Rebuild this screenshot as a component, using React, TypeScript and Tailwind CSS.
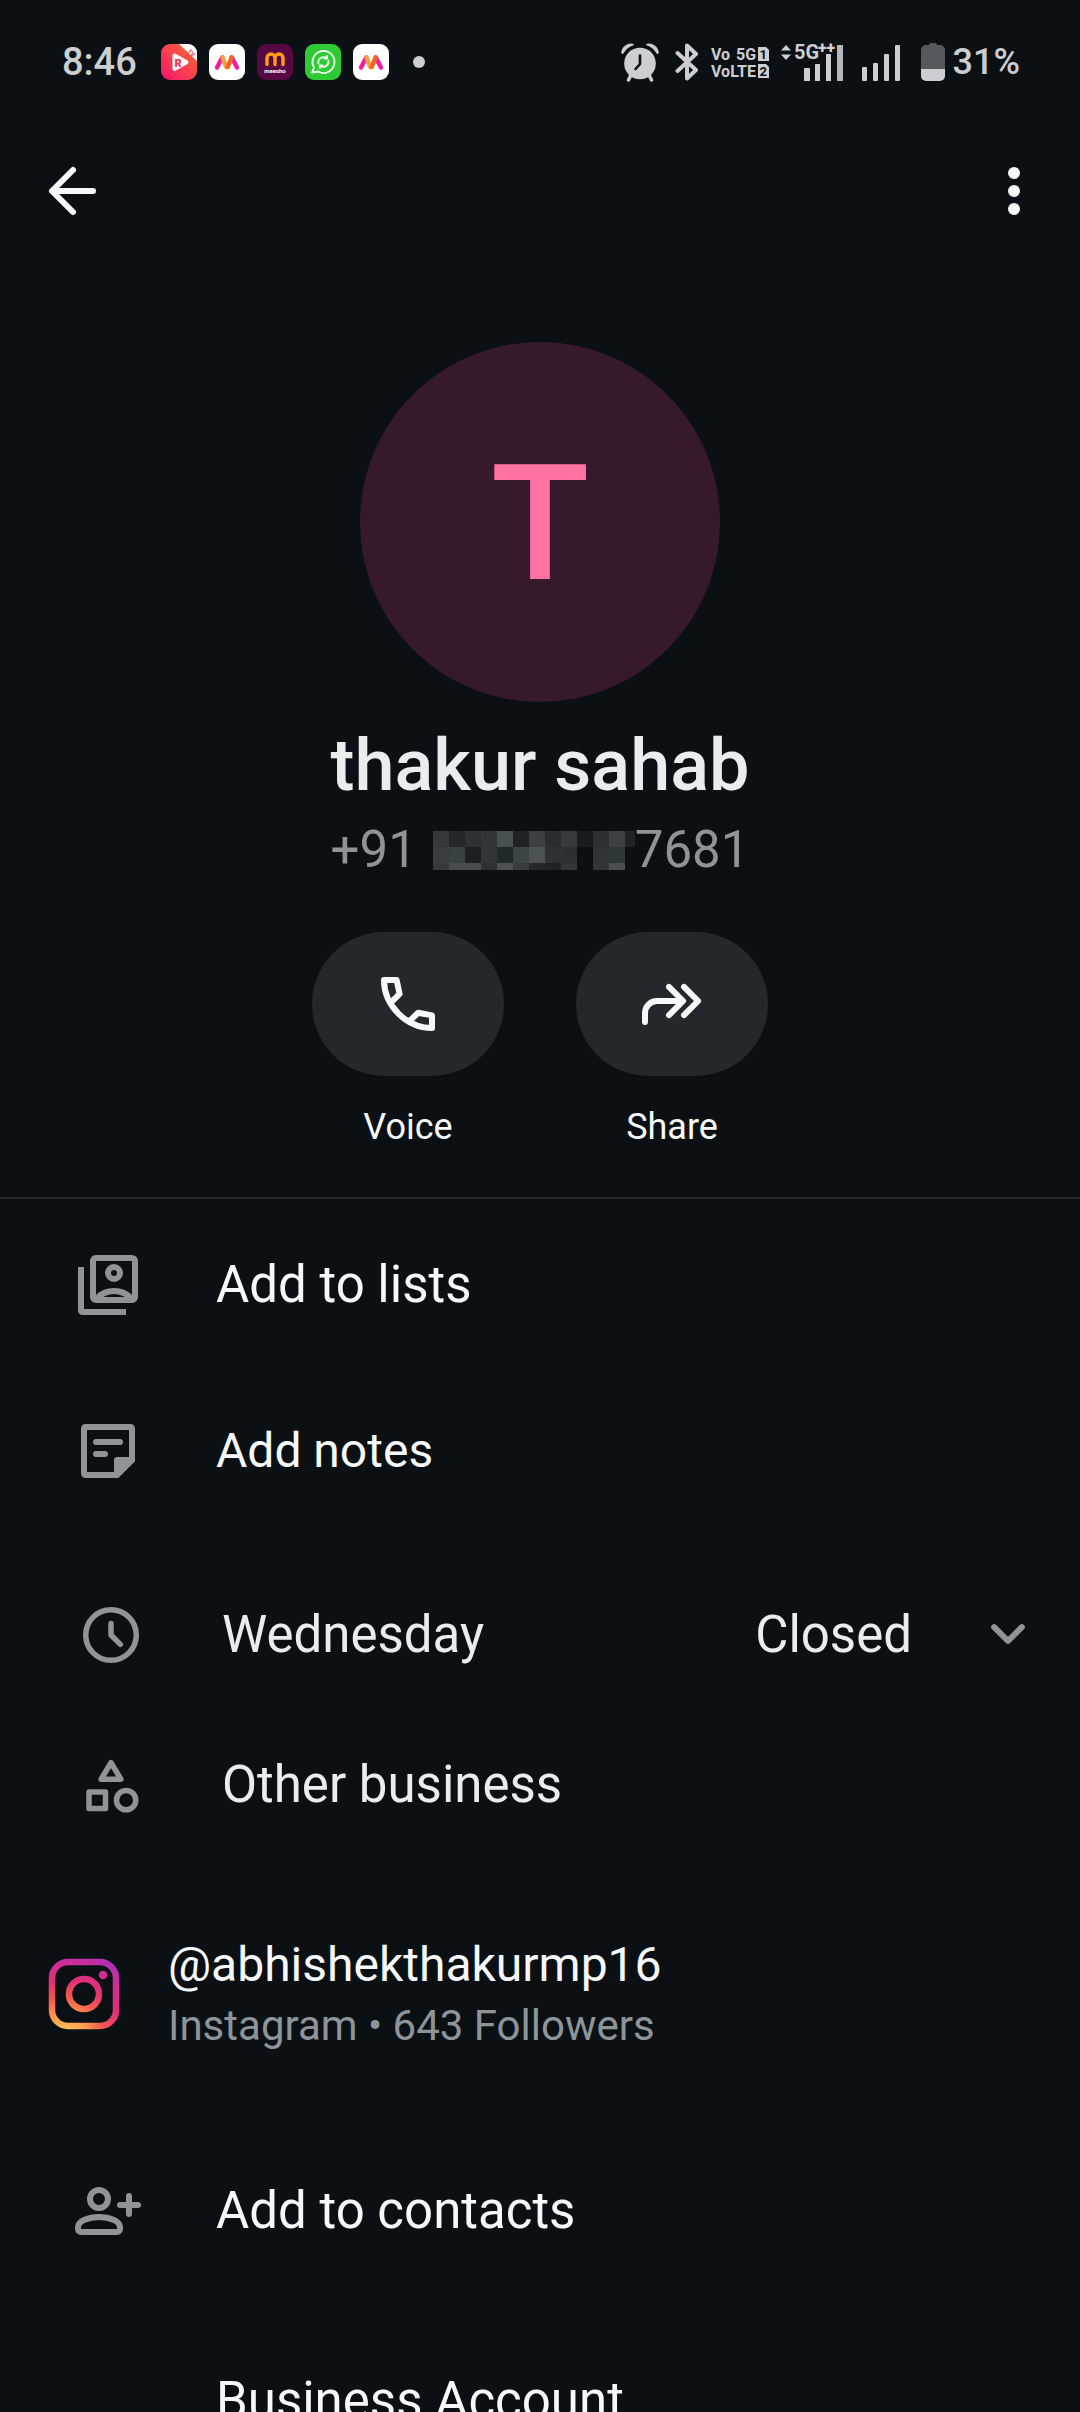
import type { ReactNode } from "react";

type MaskRow = readonly string[];

const maskRows: readonly MaskRow[] = [
  ["#33393c", "#22272a", "#2d3235", "#30373a", "#485053", "#1d2326", "#3a4144", "#272d30", "#363b3f", "#171c20", "#2a3033", "#3a4245", "#1d2327"],
  ["#363e41", "#394144", "#1a2023", "#2f3639", "#21282b", "#3c4447", "#4b5356", "#2c3235", "#2b3033", "#0b1014", "#2e3538", "#2f3639", "#0b1014"],
  ["#343b3e", "#454d50", "#454d50", "#2b3235", "#4a5255", "#363d40", "#22282b", "#1c2225", "#2f3538", "#0b1014", "#30373a", "#485053", "#0b1014"],
];

function MyntraIcon() {
  return (
    <svg viewBox="0 0 36 36" className="size-9">
      <rect width="36" height="36" rx="9" fill="#fff" />
      <path d="M8 23.5 13.2 13.5" stroke="#ee1fa5" strokeWidth="4.4" strokeLinecap="round" />
      <path d="M28 23.5 22.8 13.5" stroke="#ee1fa5" strokeWidth="4.4" strokeLinecap="round" />
      <path d="M13.4 13.2 17.2 23" stroke="#f9a03c" strokeWidth="4.4" strokeLinecap="round" />
      <path d="M22.6 13.2 18.8 23" stroke="#f4661b" strokeWidth="4.4" strokeLinecap="round" />
    </svg>
  );
}

function RetroTvIcon() {
  return (
    <svg viewBox="0 0 36 36" className="size-9">
      <defs>
        <linearGradient id="tv" x1="0" y1="1" x2="1" y2="0">
          <stop offset="0" stopColor="#f5156c" />
          <stop offset="0.6" stopColor="#fb4a48" />
          <stop offset="1" stopColor="#fd6a3a" />
        </linearGradient>
      </defs>
      <rect width="36" height="36" rx="9" fill="url(#tv)" />
      <path d="M18 0h9a9 9 0 0 1 9 9v8Z" fill="#fff" />
      <path d="M13.5 11.5v13.5l12-6.8Z" fill="#fff" stroke="#fff" strokeWidth="4" strokeLinejoin="round" />
      <text x="13.5" y="22.5" fontSize="11" fontWeight="900" fill="#f8344f">R</text>
      <text x="26" y="8" fontSize="6" fontWeight="700" fill="#f8344f" transform="rotate(42 26 8)">TV</text>
    </svg>
  );
}

function MeeshoIcon() {
  return (
    <svg viewBox="0 0 36 36" className="size-9">
      <rect width="36" height="36" rx="9" fill="#570741" />
      <path d="M10 20.5V14a4 4 0 0 1 8 0v6.5M18 14a4 4 0 0 1 8 0v6.5" fill="none" stroke="#ff9d17" strokeWidth="3.4" strokeLinecap="round" />
      <text x="18" y="28.5" fontSize="6" fontWeight="700" textAnchor="middle" fill="#fff">meesho</text>
    </svg>
  );
}

function ChatBackupIcon() {
  return (
    <svg viewBox="0 0 36 36" className="size-9">
      <rect width="36" height="36" rx="9" fill="#2fcb35" />
      <g fill="none" stroke="#f1fff1" strokeWidth="1.8" strokeLinecap="round" strokeLinejoin="round">
        <path d="M7 28.5 9 23.5a11 11 0 1 1 4 4Z" />
        <path d="M13.4 19.5a5.2 5.2 0 0 1 8.2-5.2M23.4 16.5a5.2 5.2 0 0 1-8.2 5.2" />
        <path d="M22 11.8v2.7h-2.7M14.800 24.200v-2.700h2.700" />
      </g>
    </svg>
  );
}

function AlarmIcon() {
  return (
    <svg viewBox="0 0 38 40" className="h-10 w-[38px]" fill="#cdced1">
      <circle cx="19" cy="21.5" r="15.8" />
      <path d="M1 10.5A9 9 0 0 1 12 2.5Q5 5 1.5 11.5ZM37 10.5A9 9 0 0 0 26 2.5Q33 5 36.5 11.5Z" stroke="#cdced1" strokeWidth="1.5" strokeLinejoin="round" />
      <path d="m9.5 34-2 4M28.5 34l2 4" stroke="#cdced1" strokeWidth="3.5" strokeLinecap="round" />
      <path d="M19 13.5v8.5l-4.5 5" fill="none" stroke="#0b1014" strokeWidth="2.6" strokeLinecap="round" />
    </svg>
  );
}

function BluetoothIcon() {
  return (
    <svg viewBox="0 0 24 40" className="h-10 w-6" fill="none" stroke="#cdced1" strokeWidth="4" strokeLinecap="round" strokeLinejoin="round">
      <path d="m2.5 11 18.5 17-9 8.5v-33L21 12 2.5 29" />
    </svg>
  );
}

function SimLabels() {
  return (
    <svg viewBox="0 -2 58 42" className="h-[42px] w-[58px]" fill="#cdced1" fontSize="16" fontWeight="700">
      <text x="0" y="17">Vo</text>
      <text x="25" y="17">5G</text>
      <text x="0" y="34">VoLTE</text>
      <path d="M47 4h8l3 3v11h-11Z" />
      <path d="M47 21h8l3 3v11h-11Z" />
      <text x="48.5" y="16" fontSize="13" fill="#0b1014">1</text>
      <text x="48.5" y="33" fontSize="13" fill="#0b1014">2</text>
    </svg>
  );
}

function DataSignalIcon() {
  return (
    <svg viewBox="0 -4 64 48" className="h-12 w-16" fill="#cdced1">
      <path d="M0 8.5 5 3l5 5.5ZM0 12.5h10L5 18Z" />
      <text x="13" y="17" fontSize="20" fontWeight="700">5G</text>
      <text x="37" y="11" fontSize="16" fontWeight="900">++</text>
      <path d="M24 26h4a1 1 0 0 1 1 1v12h-6V27a1 1 0 0 1 1-1ZM34 22h5v17h-5ZM45 12h5v27h-5Z" />
      <path d="M56 3h6v36h-6Z" fill="#b5b7ba" />
    </svg>
  );
}

function SignalIcon() {
  return (
    <svg viewBox="0 0 40 40" className="size-10" fill="#cdced1">
      <rect x="1" y="25" width="5" height="14" rx="1" />
      <rect x="12" y="21" width="5" height="18" rx="1" />
      <rect x="23" y="12" width="5" height="27" rx="1" />
      <rect x="34" y="3" width="5" height="36" rx="1" />
    </svg>
  );
}

function BatteryIcon() {
  return (
    <svg viewBox="0 0 24 40" className="h-10 w-6">
      <path d="M8 3a2 2 0 0 1 2-2h4a2 2 0 0 1 2 2h3a5 5 0 0 1 5 5v19H0V8a5 5 0 0 1 5-5Z" fill="#56595c" />
      <path d="M0 27h24v7a5 5 0 0 1-5 5H5a5 5 0 0 1-5-5Z" fill="#cdced1" />
    </svg>
  );
}

function StatusBar() {
  return (
    <div className="flex h-[107px] items-center justify-between pt-4 pr-[60px] pl-[62px] font-medium text-[#cdced1]">
      <div className="flex items-center gap-3">
        <span className="mr-3 text-[38px] leading-[44px]">8:46</span>
        <RetroTvIcon />
        <MyntraIcon />
        <MeeshoIcon />
        <ChatBackupIcon />
        <MyntraIcon />
        <span className="ml-3 size-3 rounded-full bg-[#cdced1]" />
      </div>
      <div className="flex items-center">
        <div className="flex items-center gap-3">
          <span className="mr-1 flex"><AlarmIcon /></span>
          <BluetoothIcon />
          <SimLabels />
          <DataSignalIcon />
          <span className="mr-2 ml-1 flex"><SignalIcon /></span>
          <BatteryIcon />
        </div>
        <span className="ml-2 text-[36px] leading-[44px]">31%</span>
      </div>
    </div>
  );
}

function TopBar() {
  return (
    <header className="flex h-[168px] items-center justify-between px-[30px]">
      <button type="button" aria-label="Back" className="size-[84px]">
        <svg viewBox="0 0 84 84" className="size-full" fill="none" stroke="#f7f8fa" strokeWidth="6" strokeLinecap="round" strokeLinejoin="round">
          <path d="M63 42H23M43 21 22 42l21 21" />
        </svg>
      </button>
      <button type="button" aria-label="More options" className="size-[72px]">
        <svg viewBox="0 0 72 72" className="size-full" fill="#f7f8fa">
          <circle cx="36" cy="18" r="6" />
          <circle cx="36" cy="36" r="6" />
          <circle cx="36" cy="54" r="6" />
        </svg>
      </button>
    </header>
  );
}

function ActionButton({ label, children }: { label: string; children: ReactNode }) {
  return (
    <button type="button" className="flex flex-col items-center gap-[30px]">
      <span className="flex h-36 w-48 items-center justify-center rounded-full bg-[#23282c]">
        <svg viewBox="0 0 24 24" className="size-[72px]" fill="none" stroke="#f7f8fa" strokeWidth="2" strokeLinecap="round" strokeLinejoin="round">
          {children}
        </svg>
      </span>
      <span className="text-[36px] leading-[42px]">{label}</span>
    </button>
  );
}

function Profile() {
  return (
    <section className="flex flex-col items-center border-b-2 border-[#22272b] pt-[67px] pb-[49px]">
      <div className="flex size-[360px] items-center justify-center rounded-full bg-[#36192b] pt-1 text-[162px] leading-none font-medium text-[#ff72a1]">T</div>
      <h1 className="mt-[22px] text-[72px] leading-[84px] font-medium text-[#e9edee]">thakur sahab</h1>
      <p className="mt-2.5 flex items-center text-[51px] leading-[64px] text-[#8d9598]">
        <span>+91</span>
        <span className="ml-4 grid grid-cols-[repeat(12,16px)_10px] grid-rows-[16px_16px_7px]" aria-label="hidden digits">
          {maskRows.flatMap((row, y) => row.map((color, x) => <span key={`${y}-${x}`} style={{ backgroundColor: color }} />))}
        </span>
        <span>7681</span>
      </p>
      <div className="mt-[50px] flex gap-[72px]">
        <ActionButton label="Voice">
          <path d="M4 4h4.2L9.2 8.6 6.2 11.6M4 4C4 12.5 11.5 20 20 20v-4.2L15.4 14.9 12.4 17.8" />
        </ActionButton>
        <ActionButton label="Share">
          <path d="M3 18v-3a4 4 0 0 1 4-4h8.5M11 6.3 15.7 11 11 15.7M16 6.3 20.7 11 16 15.7" />
        </ActionButton>
      </div>
    </section>
  );
}

function ListsIcon() {
  return (
    <svg viewBox="0 0 24 24" className="size-[72px]" fill="none" stroke="#8d9598" strokeWidth="2">
      <rect x="7" y="3" width="14" height="14" rx="1" />
      <path d="M3 6v14.5a.5.5 0 0 0 .5.5H18" />
      <circle cx="14" cy="8" r="2" />
      <path d="M8.2 16.5Q10.5 14 14 14t5.8 2.5" />
    </svg>
  );
}

function NotesIcon() {
  return (
    <svg viewBox="0 0 24 24" className="size-[72px]" fill="none" stroke="#8d9598" strokeWidth="2" strokeLinecap="round" strokeLinejoin="round">
      <path d="M4.5 4h15a.5.5 0 0 1 .5.5V15l-5 5H4.5a.5.5 0 0 1-.5-.5v-15a.5.5 0 0 1 .5-.5ZM8 9h8M8 13h3" />
      <path d="M15 15h5l-5 5Z" fill="#8d9598" />
    </svg>
  );
}

function ClockIcon() {
  return (
    <svg viewBox="0 0 24 24" className="size-[66px]" fill="none" stroke="#8d9598" strokeWidth="2" strokeLinecap="round" strokeLinejoin="round">
      <circle cx="12" cy="12" r="9.2" />
      <path d="M12 7.8V12l3.4 3.4" />
    </svg>
  );
}

function CategoryIcon() {
  return (
    <svg viewBox="0 0 24 24" className="size-[66px]" fill="none" stroke="#8d9598" strokeWidth="2" strokeLinejoin="round">
      <path d="M12 3.9 15.6 9.9H8.4Z" />
      <rect x="4" y="14.5" width="6" height="6" />
      <circle cx="17.5" cy="17.5" r="3.5" />
    </svg>
  );
}

function ChevronDownIcon() {
  return (
    <svg viewBox="0 0 24 24" className="size-[72px]" fill="none" stroke="#8d9598" strokeWidth="2" strokeLinecap="round" strokeLinejoin="round">
      <path d="m7.4 9.4 4.6 4.6 4.6-4.6" />
    </svg>
  );
}

function AddContactIcon() {
  return (
    <svg viewBox="0 0 24 24" className="size-[72px]" fill="none" stroke="#8d9598" strokeWidth="2" strokeLinecap="round" strokeLinejoin="round">
      <circle cx="9" cy="8" r="3" />
      <path d="M9 14c3.5 0 7 1.4 7 3.4V18a1 1 0 0 1-1 1H3a1 1 0 0 1-1-1v-.6C2 15.4 5.5 14 9 14ZM19 7v6M16 10h6" />
    </svg>
  );
}

function InstagramIcon() {
  return (
    <svg viewBox="0 0 72 72" className="size-[72px]" fill="none" stroke="url(#insta)" strokeWidth="6.5">
      <defs>
        <radialGradient id="insta" gradientUnits="userSpaceOnUse" cx="18" cy="76" r="84">
          <stop offset="0" stopColor="#ffc75c" />
          <stop offset="0.25" stopColor="#fd9a4f" />
          <stop offset="0.45" stopColor="#f4564f" />
          <stop offset="0.65" stopColor="#e03077" />
          <stop offset="0.85" stopColor="#cd2d98" />
          <stop offset="1" stopColor="#b02fb8" />
        </radialGradient>
      </defs>
      <rect x="4" y="4" width="64" height="64" rx="16" />
      <circle cx="36" cy="36" r="15" />
      <circle cx="55" cy="17" r="4.3" fill="url(#insta)" stroke="none" />
    </svg>
  );
}

export default function App() {
  return (
    <main className="h-screen w-full overflow-hidden bg-[#0b1014] font-['Roboto',sans-serif] text-[#f7f8fa]">
      <StatusBar />
      <TopBar />
      <Profile />

      <section>
        <button type="button" className="flex h-[172px] w-full items-center gap-[72px] px-[72px] text-left text-[51px] leading-[60px]">
          <ListsIcon />
          Add to lists
        </button>
        <button type="button" className="flex h-40 w-full items-center gap-[72px] px-[72px] text-left text-[48px] leading-[56px]">
          <NotesIcon />
          Add notes
        </button>
      </section>

      <section className="mt-[29px] text-[51px] leading-[60px] text-[#e9edee]">
        <button type="button" className="flex h-[150px] w-full items-center gap-[78px] pr-9 pl-[78px] text-left">
          <ClockIcon />
          <span className="flex-1">Wednesday</span>
          <span className="flex items-center gap-[60px]">
            Closed
            <ChevronDownIcon />
          </span>
        </button>
        <div className="flex h-[150px] items-center gap-[78px] px-[78px]">
          <CategoryIcon />
          <span>Other business</span>
        </div>
      </section>

      <a href="#instagram" className="mt-[54px] flex h-40 items-center gap-12 px-12">
        <InstagramIcon />
        <span className="flex flex-col gap-2">
          <span className="text-[48px] leading-[56px]">@abhishekthakurmp16</span>
          <span className="text-[42px] leading-[50px] text-[#8d9598]">Instagram • 643 Followers</span>
        </span>
      </a>

      <button type="button" className="mt-[57px] flex h-40 w-full items-center gap-[72px] px-[72px] text-left text-[51px] leading-[60px]">
        <AddContactIcon />
        Add to contacts
      </button>

      <section className="mt-[30px] flex h-40 items-center pl-[216px] text-[51px] leading-[60px]">Business Account</section>
    </main>
  );
}
